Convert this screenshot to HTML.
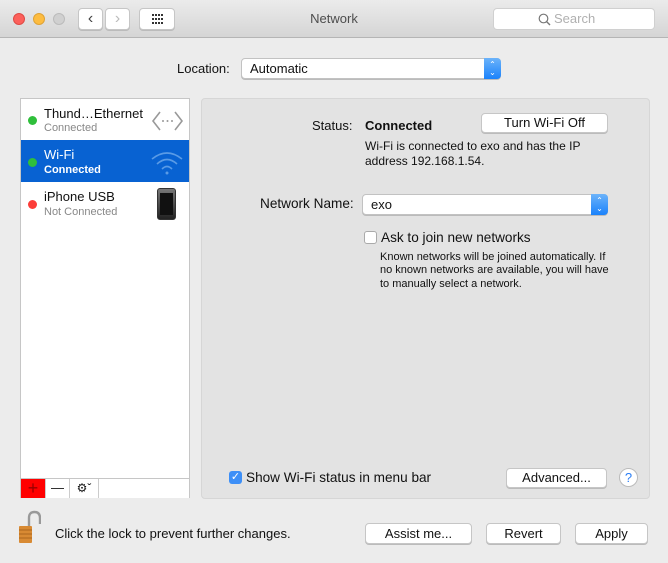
<!DOCTYPE html>
<html><head><meta charset="utf-8"><style>
*{box-sizing:border-box;margin:0;padding:0}
body{width:668px;height:563px;background:#ececec;font-family:"Liberation Sans",sans-serif;font-size:13px;color:#111;position:relative;overflow:hidden}
.a{position:absolute}
.tb{left:0;top:0;width:668px;height:38px;background:linear-gradient(#ebebeb,#d5d5d5);border-bottom:1px solid #b5b5b5}
.dot{width:12px;height:12px;border-radius:50%;top:13px}
.btn{background:#fff;border:1px solid #c6c6c6;border-radius:4px;box-shadow:0 1px 0 #bbb;text-align:center}
.sd{width:9px;height:9px;border-radius:50%}
.sm{font-size:11px}
.pop{background:#fff;border:1px solid #c2c2c2;border-radius:4px;box-shadow:0 1px 0 #bbb}
.arr{right:-1px;top:-1px;bottom:-1px;width:17px;background:linear-gradient(#6cb3fa,#1a82fb);border-radius:0 4px 4px 0;color:#fff;font-size:8px;line-height:8px;text-align:center;padding-top:3px}
</style></head><body>
<div class="a tb"></div>
<div class="a dot" style="left:13px;background:#fc605b;border:1px solid #de4a45"></div>
<div class="a dot" style="left:33px;background:#fdbc40;border:1px solid #dea236"></div>
<div class="a dot" style="left:53px;background:#d0d0d0;border:1px solid #bbb"></div>
<div class="a btn" style="left:78px;top:8px;width:25px;height:22px;font-size:16px;line-height:19px;color:#444">&#8249;</div>
<div class="a btn" style="left:105px;top:8px;width:25px;height:22px;font-size:16px;line-height:19px;color:#bbb">&#8250;</div>
<div class="a btn" style="left:139px;top:8px;width:36px;height:22px">
<svg width="36" height="20" viewBox="0 0 36 20"><g fill="#333">
<rect x="12" y="5" width="2" height="2"/><rect x="15" y="5" width="2" height="2"/><rect x="18" y="5" width="2" height="2"/><rect x="21" y="5" width="2" height="2"/>
<rect x="12" y="9" width="2" height="2"/><rect x="15" y="9" width="2" height="2"/><rect x="18" y="9" width="2" height="2"/><rect x="21" y="9" width="2" height="2"/>
<rect x="12" y="13" width="2" height="2"/><rect x="15" y="13" width="2" height="2"/><rect x="18" y="13" width="2" height="2"/><rect x="21" y="13" width="2" height="2"/></g></svg></div>
<div class="a" style="left:0;width:668px;top:11px;text-align:center;color:#4d4d4d">Network</div>
<div class="a btn" style="left:493px;top:8px;width:162px;height:22px;box-shadow:none;border-color:#d0d0d0;color:#b0b0b0;line-height:20px;padding-left:60px;text-align:left">
<svg class="a" style="left:44px;top:4px" width="13" height="13"><circle cx="5.5" cy="5.5" r="4.3" fill="none" stroke="#777" stroke-width="1.2"/><line x1="8.6" y1="8.6" x2="12" y2="12" stroke="#777" stroke-width="1.4"/></svg>
Search</div>

<div class="a" style="left:177px;top:61px">Location:</div>
<div class="a pop" style="left:241px;top:58px;width:260px;height:21px"><span class="a" style="left:8px;top:2px">Automatic</span><div class="a arr">&#8963;<br>&#8964;</div></div>

<div class="a" style="left:20px;top:98px;width:170px;height:400px;background:#fff;border:1px solid #c6c6c6"></div>
<div class="a sd" style="left:28px;top:116px;background:#2fbf3b"></div>
<div class="a" style="left:44px;top:106px">Thund…Ethernet</div>
<div class="a sm" style="left:44px;top:122px;color:#888">Connected</div>
<svg class="a" style="left:151px;top:110px" width="33" height="22"><g fill="none" stroke="#999" stroke-width="1.6"><path d="M9 2 L2 11 L9 20"/><path d="M24 2 L31 11 L24 20"/></g><g fill="#999"><circle cx="12" cy="11" r="1"/><circle cx="16.5" cy="11" r="1"/><circle cx="21" cy="11" r="1"/></g></svg>
<div class="a" style="left:21px;top:140px;width:168px;height:42px;background:#0862d2"></div>
<div class="a sd" style="left:28px;top:158px;background:#2fbf3b"></div>
<div class="a" style="left:44px;top:147px;color:#fff">Wi-Fi</div>
<div class="a sm" style="left:44px;top:164px;color:#fff;font-weight:bold">Connected</div>
<svg class="a" style="left:150px;top:149px" width="34" height="28"><g fill="none" stroke="#5a9be6" stroke-width="1.6"><path d="M2 10 Q17 -2 32 10"/><path d="M7 15 Q17 6 27 15"/><path d="M12 20 Q17 15 22 20"/></g><circle cx="17" cy="24" r="1.5" fill="#5a9be6"/></svg>
<div class="a sd" style="left:28px;top:200px;background:#fc3d39"></div>
<div class="a" style="left:44px;top:189px">iPhone USB</div>
<div class="a sm" style="left:44px;top:206px;color:#888">Not Connected</div>
<div class="a" style="left:157px;top:188px;width:19px;height:32px;border-radius:3px;background:linear-gradient(#777,#222);border:1px solid #333"><div class="a" style="left:2px;top:4px;width:13px;height:22px;background:#111"></div></div>
<div class="a" style="left:21px;top:478px;width:168px;height:20px;border-top:1px solid #c6c6c6;background:#fff"></div>
<div class="a" style="left:21px;top:479px;width:24px;height:19px;background:#f00;color:#900;font-size:18px;line-height:18px;text-align:center">+</div>
<div class="a" style="left:45px;top:479px;width:25px;height:19px;border-left:1px solid #ccc;border-right:1px solid #ccc;text-align:center;line-height:17px">—</div>
<div class="a" style="left:70px;top:479px;width:29px;height:19px;border-right:1px solid #ccc;text-align:center;line-height:18px;font-size:12px">&#9881;&#711;</div>

<div class="a" style="left:201px;top:98px;width:449px;height:401px;background:#e3e3e3;border:1px solid #d6d6d6;border-radius:4px"></div>
<div class="a" style="left:312px;top:118px">Status:</div>
<div class="a" style="left:365px;top:118px;font-weight:bold">Connected</div>
<div class="a btn" style="left:481px;top:113px;width:127px;height:20px;line-height:18px">Turn Wi-Fi Off</div>
<div class="a" style="left:365px;top:139px;line-height:15px;font-size:12px">Wi-Fi is connected to exo and has the IP<br>address 192.168.1.54.</div>
<div class="a" style="left:260px;top:196px;font-size:13.6px">Network Name:</div>
<div class="a pop" style="left:362px;top:194px;width:246px;height:21px"><span class="a" style="left:8px;top:2px">exo</span><div class="a arr">&#8963;<br>&#8964;</div></div>
<div class="a" style="left:364px;top:231px;width:13px;height:13px;background:#fff;border:1px solid #aaa;border-radius:3px"></div>
<div class="a" style="left:381px;top:230px;font-size:13.6px">Ask to join new networks</div>
<div class="a" style="left:380px;top:251px;font-size:11px;line-height:13.3px">Known networks will be joined automatically. If<br>no known networks are available, you will have<br>to manually select a network.</div>
<div class="a" style="left:229px;top:471px;width:13px;height:13px;background:#3d8ff7;border-radius:3px;color:#fff;font-size:11px;line-height:13px;text-align:center">&#10003;</div>
<div class="a" style="left:246px;top:470px;font-size:13.6px">Show Wi-Fi status in menu bar</div>
<div class="a btn" style="left:506px;top:468px;width:101px;height:20px;line-height:18px">Advanced...</div>
<div class="a" style="left:619px;top:468px;width:19px;height:19px;border-radius:50%;background:#fff;border:1px solid #bbb;color:#2a7ef5;text-align:center;line-height:17px;font-size:13px">?</div>

<svg class="a" style="left:17px;top:510px" width="24" height="34"><path d="M12 17 V8 Q12 2 17.5 2 Q23 2 23 8 V14" fill="none" stroke="#999" stroke-width="2.4"/><rect x="2" y="16" width="13" height="17" rx="1" fill="#d88a33"/><g stroke="#a35c18" stroke-width="0.8"><line x1="2" y1="20" x2="15" y2="20"/><line x1="2" y1="24" x2="15" y2="24"/><line x1="2" y1="28" x2="15" y2="28"/></g></svg>
<div class="a" style="left:55px;top:526px">Click the lock to prevent further changes.</div>
<div class="a btn" style="left:365px;top:523px;width:107px;height:21px;line-height:19px">Assist me...</div>
<div class="a btn" style="left:486px;top:523px;width:75px;height:21px;line-height:19px">Revert</div>
<div class="a btn" style="left:575px;top:523px;width:73px;height:21px;line-height:19px">Apply</div>
</body></html>
